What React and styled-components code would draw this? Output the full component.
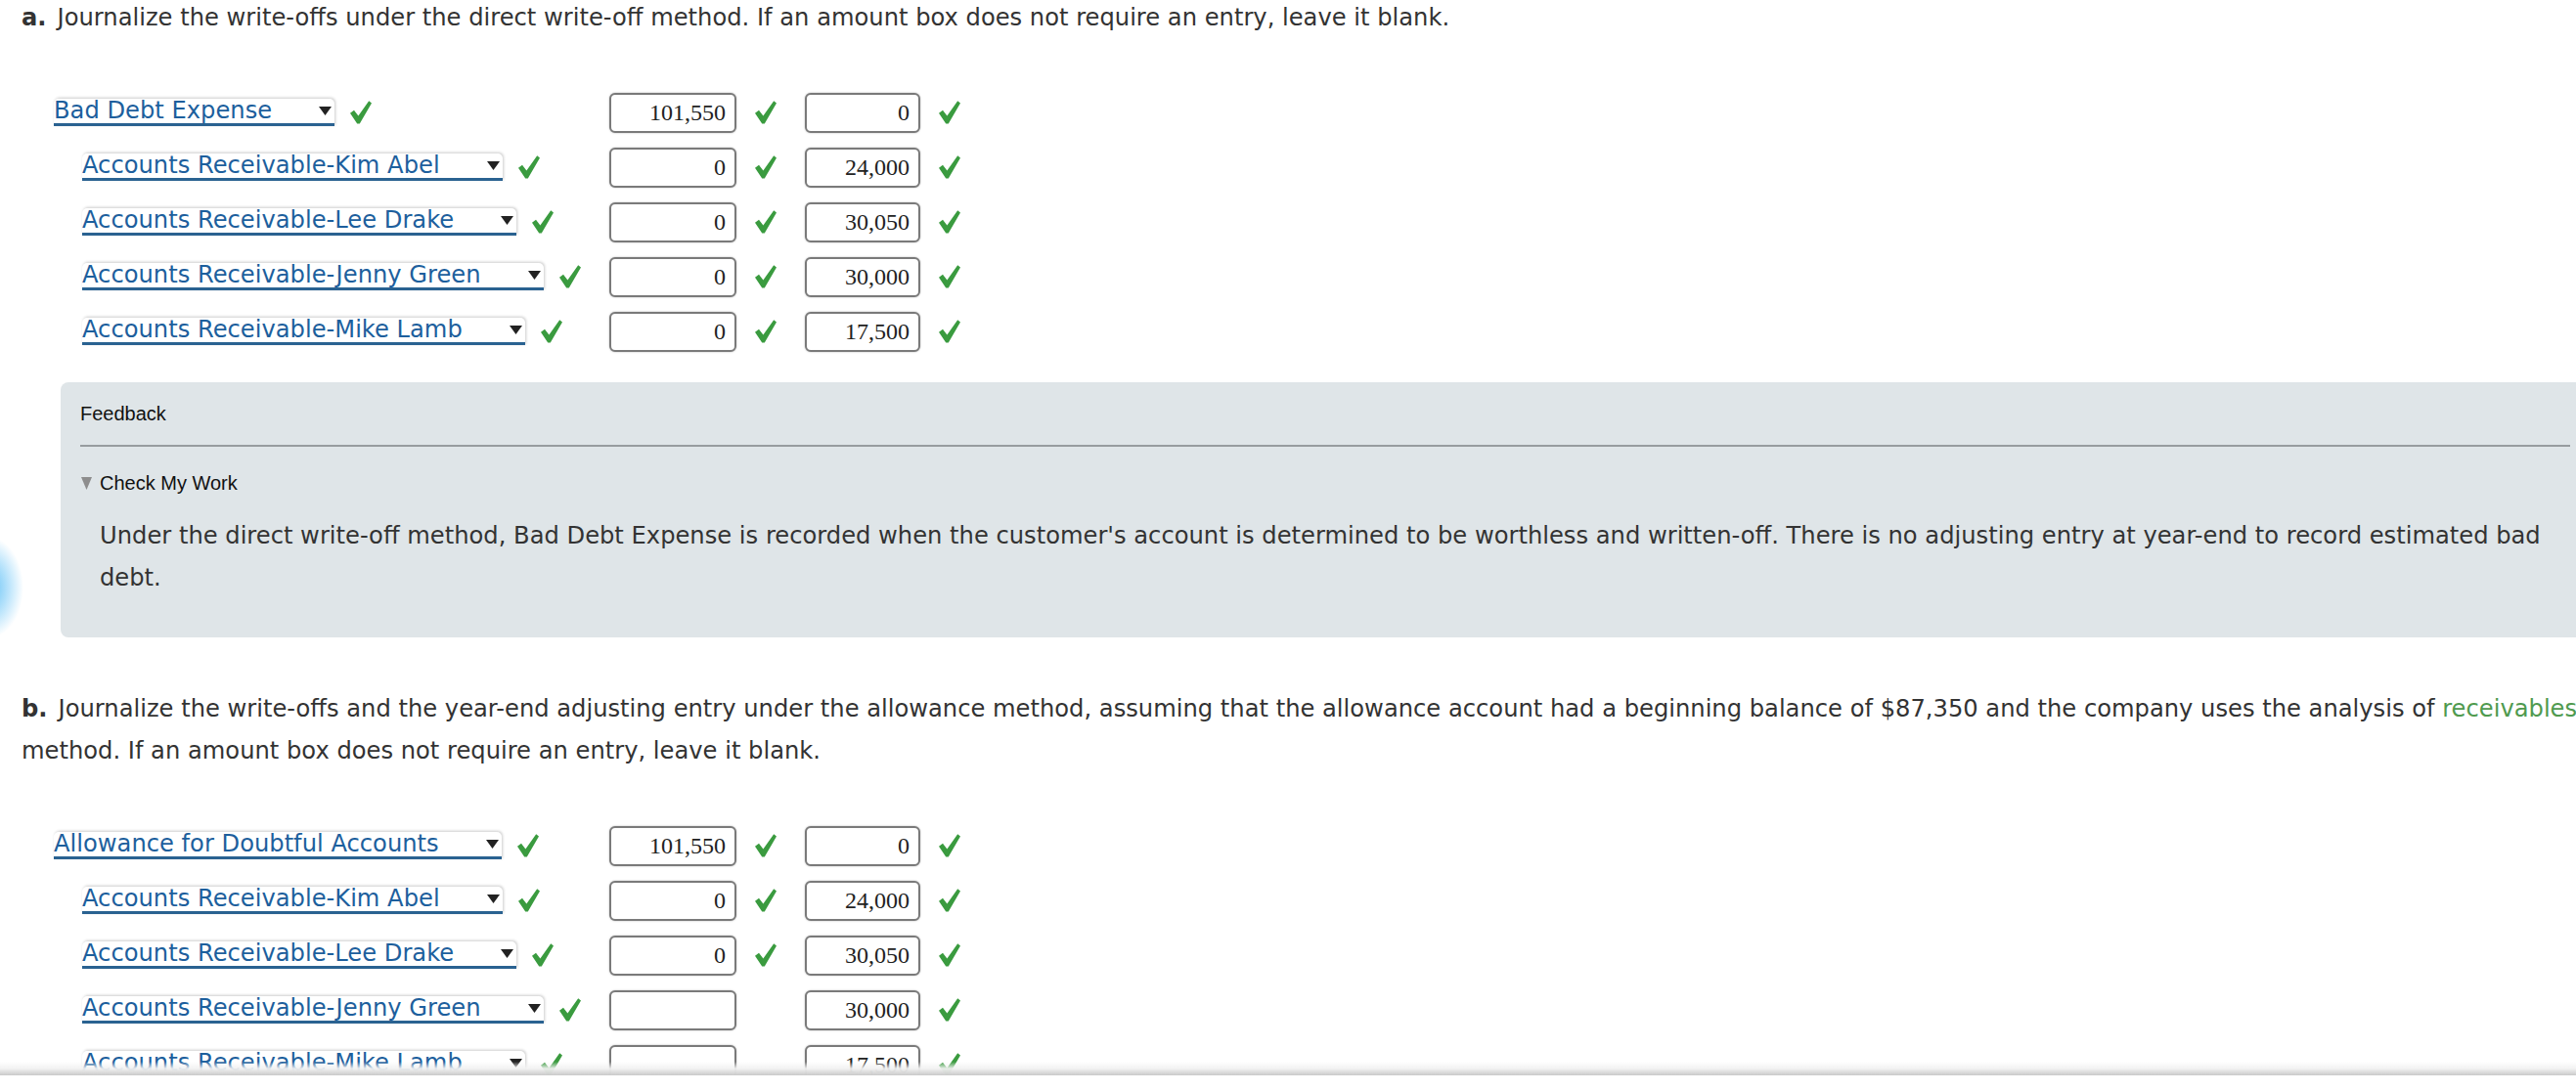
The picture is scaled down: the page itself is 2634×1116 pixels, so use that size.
import React from 'react';
import styled, { createGlobalStyle } from 'styled-components';

const GlobalStyle = createGlobalStyle`
  html, body {
    margin: 0;
    padding: 0;
    background: #fff;
    overflow: hidden;
  }
  body {
    width: 2634px;
    height: 1116px;
  }
`;

const Page = styled.div`
  position: relative;
  width: 2626px;
  padding-left: 22px;
  font-family: "DejaVu Sans", Verdana, sans-serif;
  font-size: 24.2px;
  color: #333;
`;

const Prompt = styled.p`
  margin: ${p => p.$top}px 0 0;
  line-height: 43px;
  white-space: nowrap;
`;

const Letter = styled.b`
  font-weight: bold;
  margin-right: 11px;
`;

const Link = styled.span`
  color: #4f9a4f;
`;

const Entries = styled.div`
  margin-top: 47px;
`;

const Row = styled.div`
  display: grid;
  grid-template-columns: 601px 130px 70px 118px 41px;
  align-items: center;
  height: 56px;
`;

const AccountCell = styled.div`
  display: flex;
  align-items: center;
  gap: 16px;
  padding-left: ${p => (p.$indent ? 62 : 33)}px;
`;

const Select = styled.div`
  display: inline-flex;
  align-items: center;
  height: 25px;
  line-height: 25px;
  padding-right: 3px;
  background: #fff;
  color: #1d5f9d;
  border-bottom: 3px solid #2a6291;
  border-radius: 5px 5px 0 0;
  box-shadow: 1px -1px 3px rgba(0, 0, 0, 0.2);
  white-space: nowrap;
`;

const Arrow = styled.svg`
  margin-left: 48px;
  flex: none;
`;

const Amount = styled.input`
  box-sizing: border-box;
  width: 100%;
  height: 41px;
  margin: 0;
  padding: 0 9px;
  border: 2px solid #7a7a7a;
  border-radius: 6px;
  box-shadow: 0 0 2px rgba(0, 0, 0, 0.3);
  background: #fff;
  text-align: right;
  font-family: "Liberation Serif", "Times New Roman", serif;
  font-size: 24px;
  color: #222;
  outline: none;
`;

const Mark = styled.div`
  display: flex;
  align-items: center;
  padding-left: 19px;
  height: 24px;
`;

const CheckSvg = styled.svg`
  display: block;
  flex: none;
`;

const Feedback = styled.section`
  margin: 24px 0 0 40px;
  padding: 21px 20px 39px;
  background: #dfe5e8;
  border-radius: 8px;
`;

const FeedbackTitle = styled.div`
  font-family: "Liberation Sans", Arial, sans-serif;
  font-size: 20px;
  line-height: 22px;
  color: #111;
`;

const Rule = styled.hr`
  margin: 21px 0 0;
  border: 0;
  height: 2px;
  background: #979c9f;
`;

const Summary = styled.div`
  display: flex;
  align-items: center;
  gap: 8px;
  margin-top: 26px;
  padding-left: 1px;
  font-family: "Liberation Sans", Arial, sans-serif;
  font-size: 20px;
  line-height: 22px;
  color: #111;
`;

const Explanation = styled.p`
  margin: 22px 0 0;
  padding-left: 20px;
  line-height: 43px;
`;

const Glow = styled.div`
  position: absolute;
  left: -48px;
  top: 552px;
  width: 72px;
  height: 104px;
  border-radius: 50%;
  background: radial-gradient(
    closest-side,
    rgba(88, 188, 244, 0.95) 0%,
    rgba(120, 202, 248, 0.55) 55%,
    rgba(255, 255, 255, 0) 100%
  );
  pointer-events: none;
`;

const BottomBar = styled.div`
  position: fixed;
  left: 0;
  right: 0;
  bottom: 0;
  height: 30px;
  background: linear-gradient(
    180deg,
    rgba(255, 255, 255, 0) 0px,
    rgba(242, 242, 242, 0.95) 7px,
    #c9c9c9 14px,
    #fff 14px,
    #fff 100%
  );
`;

const Check = () => (
  <CheckSvg viewBox="0 0 22 24" width="22" height="24">
    <path d="M0 12.8 L4 9.8 L8.4 15.6 L19.2 0.2 L22 2.4 L9.8 23.6 L7.2 23.6 Z" fill="#3a9b3f" />
  </CheckSvg>
);

const Caret = () => (
  <Arrow viewBox="0 0 13 9" width="13" height="9">
    <polygon points="0,0 13,0 6.5,9" fill="#222" />
  </Arrow>
);

const partA = [
  { account: 'Bad Debt Expense', debit: '101,550', credit: '0', dOk: true },
  { account: 'Accounts Receivable-Kim Abel', debit: '0', credit: '24,000', dOk: true, indent: true },
  { account: 'Accounts Receivable-Lee Drake', debit: '0', credit: '30,050', dOk: true, indent: true },
  { account: 'Accounts Receivable-Jenny Green', debit: '0', credit: '30,000', dOk: true, indent: true },
  { account: 'Accounts Receivable-Mike Lamb', debit: '0', credit: '17,500', dOk: true, indent: true },
];

const partB = [
  { account: 'Allowance for Doubtful Accounts', debit: '101,550', credit: '0', dOk: true },
  { account: 'Accounts Receivable-Kim Abel', debit: '0', credit: '24,000', dOk: true, indent: true },
  { account: 'Accounts Receivable-Lee Drake', debit: '0', credit: '30,050', dOk: true, indent: true },
  { account: 'Accounts Receivable-Jenny Green', debit: '', credit: '30,000', dOk: false, indent: true },
  { account: 'Accounts Receivable-Mike Lamb', debit: '', credit: '17,500', dOk: false, indent: true },
];

function Journal({ rows }) {
  return (
    <Entries>
      {rows.map((r, i) => (
        <Row key={i}>
          <AccountCell $indent={r.indent}>
            <Select>
              {r.account}
              <Caret />
            </Select>
            <Check />
          </AccountCell>
          <Amount readOnly value={r.debit} />
          <Mark>{r.dOk && <Check />}</Mark>
          <Amount readOnly value={r.credit} />
          <Mark><Check /></Mark>
        </Row>
      ))}
    </Entries>
  );
}

export default function App() {
  return (
    <>
      <GlobalStyle />
      <Page>
        <Prompt $top={-3}>
          <Letter>a.</Letter>Journalize the write-offs under the direct write-off method. If an amount box does not require an entry, leave it blank.
        </Prompt>
        <Journal rows={partA} />

        <Feedback>
          <FeedbackTitle>Feedback</FeedbackTitle>
          <Rule />
          <Summary>
            <svg width="11" height="13" viewBox="0 0 11 13">
              <polygon points="0,0 11,0 5.5,13" fill="#8d8d8d" />
            </svg>
            Check My Work
          </Summary>
          <Explanation>
            Under the direct write-off method, Bad Debt Expense is recorded when the customer's account is determined to be worthless and written-off. There is no adjusting entry at year-end to record estimated bad debt.
          </Explanation>
        </Feedback>

        <Prompt $top={52}>
          <Letter>b.</Letter>Journalize the write-offs and the year-end adjusting entry under the allowance method, assuming that the allowance account had a beginning balance of $87,350 and the company uses the analysis of <Link>receivables</Link>
          <br />
          method. If an amount box does not require an entry, leave it blank.
        </Prompt>
        <Journal rows={partB} />

        <Glow />
      </Page>
      <BottomBar />
    </>
  );
}
